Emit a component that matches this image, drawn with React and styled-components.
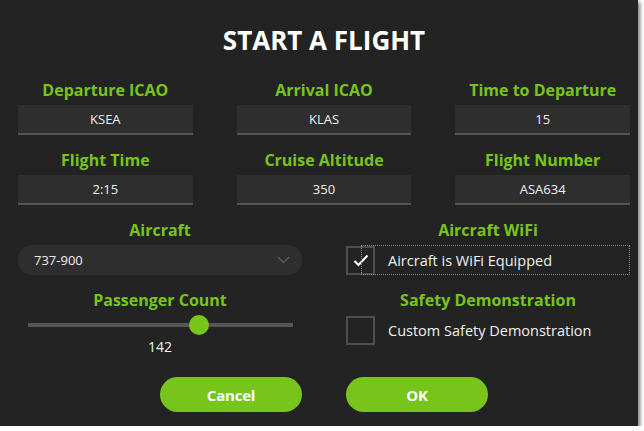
import * as React from 'react';
import styled, { createGlobalStyle } from 'styled-components';

const GREEN = '#77c51b';

const GlobalStyle = createGlobalStyle`
  html, body {
    margin: 0;
    padding: 0;
    background: #ffffff;
  }
  body {
    font-family: 'Open Sans', 'Noto Sans', sans-serif;
  }
`

const Panel = styled.div`
  width: 638px;
  height: 426px;
  box-sizing: border-box;
  background: #232323;
  box-shadow: 2px 2px 4px rgba(0, 0, 0, 0.55);
  padding: 0 8px 0 18px;
  color: #f2f2f2;
`

const Title = styled.h1`
  margin: 0;
  height: 75px;
  display: flex;
  align-items: center;
  justify-content: center;
  padding-top: 4px;
  box-sizing: border-box;
  font-size: 26px;
  font-weight: 700;
  color: #ffffff;
  letter-spacing: 0;
`

const Grid = styled.div`
  display: grid;
  grid-template-columns: repeat(${p => p.$cols}, 1fr);
  column-gap: 44px;
`

const Field = styled.div`
  display: flex;
  flex-direction: column;
  margin-bottom: 10px;
`

const Label = styled.div`
  height: 30px;
  display: flex;
  align-items: center;
  justify-content: center;
  font-size: 16px;
  font-weight: 700;
  color: ${GREEN};
  letter-spacing: 0;
`

const TextBox = styled.div`
  height: 30px;
  box-sizing: border-box;
  background: #2e2e2e;
  border-bottom: 2px solid #555555;
  display: flex;
  align-items: center;
  justify-content: center;
  font-size: 13px;
  color: #eeeeee;
`

const Combo = styled.div`
  height: 30px;
  border-radius: 14px;
  background: #2e2e2e;
  display: flex;
  align-items: center;
  justify-content: space-between;
  padding: 0 12px 0 16px;
  font-size: 13px;
  color: #eeeeee;
`

const CheckRow = styled.div`
  position: relative;
  height: 30px;
  display: flex;
  align-items: center;
  gap: 13px;
  font-size: 14.5px;
  color: #f0f0f0;
`

const Box = styled.div`
  width: 29px;
  height: 29px;
  box-sizing: border-box;
  border: 2px solid #4e4e4e;
  display: flex;
  align-items: center;
  justify-content: center;
  flex-shrink: 0;
`

const FocusRect = styled.div`
  position: absolute;
  left: 15px;
  right: 0;
  top: 0;
  bottom: 0;
  border: 1px dotted #8a8a8a;
`

const Slider = styled.div`
  position: relative;
  height: 20px;
  margin: 0 9px 0 10px;
  display: flex;
  align-items: center;
`

const Track = styled.div`
  width: 100%;
  height: 4px;
  background: #555555;
`

const Thumb = styled.div`
  position: absolute;
  top: 0;
  width: 20px;
  height: 20px;
  margin-left: -10px;
  border-radius: 50%;
  background: ${GREEN};
`

const SliderValue = styled.div`
  text-align: center;
  font-size: 14px;
  color: #f0f0f0;
  margin-top: 2px;
`

const ButtonCell = styled.div`
  display: flex;
  justify-content: ${p => p.$align};
  margin-top: 11px;
`

const Button = styled.button`
  width: 142px;
  height: 35px;
  border: none;
  border-radius: 18px;
  background: ${GREEN};
  color: #ffffff;
  font-family: 'Open Sans', 'Noto Sans', sans-serif;
  font-size: 15px;
  font-weight: 700;
  letter-spacing: -0.2px;
`

const textFields = [
  { label: 'Departure ICAO', value: 'KSEA' },
  { label: 'Arrival ICAO', value: 'KLAS' },
  { label: 'Time to Departure', value: '15' },
  { label: 'Flight Time', value: '2:15' },
  { label: 'Cruise Altitude', value: '350' },
  { label: 'Flight Number', value: 'ASA634' },
]

const passengers = { min: 0, max: 220, value: 142 }

const Chevron = () => (
  <svg width="13" height="8" viewBox="0 0 13 8">
    <polyline points="1,1 6.5,6.5 12,1" fill="none" stroke="#5a5a5a" strokeWidth="1.4" />
  </svg>
)

const Check = () => (
  <svg width="16" height="13" viewBox="0 0 16 13">
    <polyline points="1.5,7 5.5,11 14.5,1.5" fill="none" stroke="#ffffff" strokeWidth="2" />
  </svg>
)

const App = () => {
  const pct = (passengers.value - passengers.min) / (passengers.max - passengers.min) * 100

  return (
    <Panel>
      <GlobalStyle />
      <Title>START A FLIGHT</Title>
      <Grid $cols={3}>
        {textFields.map(f => (
          <Field key={f.label}>
            <Label>{f.label}</Label>
            <TextBox>{f.value}</TextBox>
          </Field>
        ))}
      </Grid>
      <Grid $cols={2}>
        <Field>
          <Label>Aircraft</Label>
          <Combo>
            <span>737-900</span>
            <Chevron />
          </Combo>
        </Field>
        <Field>
          <Label>Aircraft WiFi</Label>
          <CheckRow>
            <Box><Check /></Box>
            <span>Aircraft is WiFi Equipped</span>
            <FocusRect />
          </CheckRow>
        </Field>
        <Field>
          <Label>Passenger Count</Label>
          <Slider>
            <Track />
            <Thumb style={{ left: `${pct}%` }} />
          </Slider>
          <SliderValue>{passengers.value}</SliderValue>
        </Field>
        <Field>
          <Label>Safety Demonstration</Label>
          <CheckRow>
            <Box />
            <span>Custom Safety Demonstration</span>
          </CheckRow>
        </Field>
        <ButtonCell $align='flex-end'>
          <Button>Cancel</Button>
        </ButtonCell>
        <ButtonCell $align='flex-start'>
          <Button>OK</Button>
        </ButtonCell>
      </Grid>
    </Panel>
  );
}

export default App;
